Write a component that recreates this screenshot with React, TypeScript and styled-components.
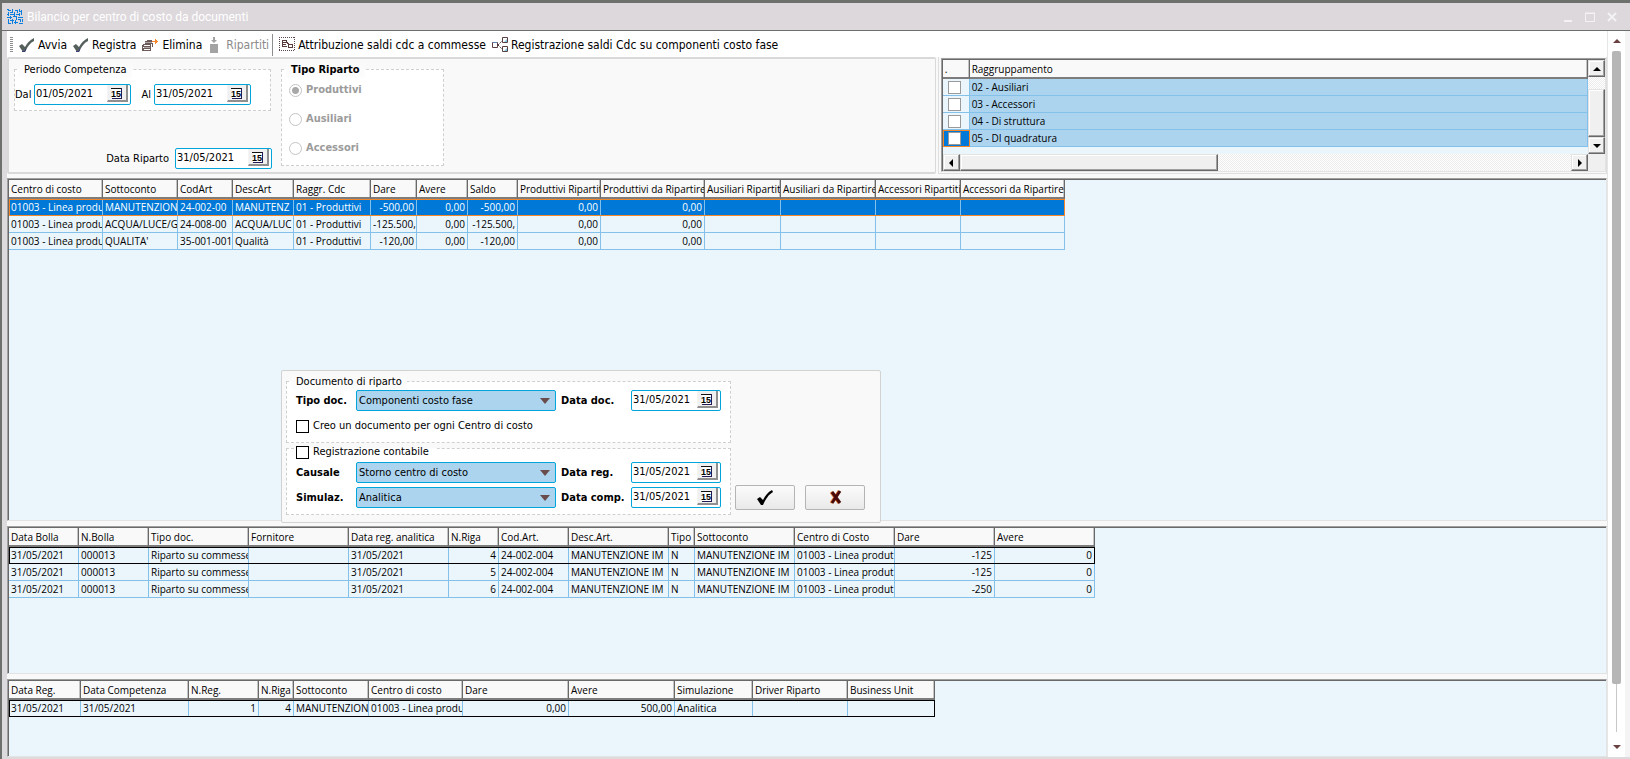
import React from "react";
import styled, { createGlobalStyle, css } from "styled-components";

const UI = '"DejaVu Sans Condensed", "DejaVu Sans", Tahoma, sans-serif';
const GRID = '"Open Sans", "Noto Sans", sans-serif';

const GlobalStyle = createGlobalStyle`
  *, *::before, *::after { box-sizing: border-box; }
  body { margin: 0; background: #dcdadc; font: 11px/16px ${UI}; color: #000; }
  button, input, select { font: inherit; color: inherit; margin: 0; }
`;

/* Window frame */
const Window = styled.div`
  min-height: 100vh;
  display: flex;
  flex-direction: column;
  border-top: 3px solid #6e706e;
  border-left: 2px solid #6e706e;
  background: #dcdadc;
`;
const TitleBar = styled.header`
  height: 28px;
  display: flex;
  align-items: center;
  gap: 4px;
  padding: 0 9px 0 5px;
  background: #ddd8dc;
  border-bottom: 1px solid #6e706e;
  color: #fff;
`;
const Title = styled.h1`
  flex: 1;
  margin: 0;
  font: 12px/16px Roboto, sans-serif;
`;
const WindowButton = styled.button`
  width: 18px;
  height: 18px;
  padding: 0;
  border: 0;
  background: none;
  display: grid;
  place-items: center;
`;
const Client = styled.div`
  flex: 1;
  display: flex;
  padding: 0 0 2px 5px;
`;
const Main = styled.main`
  flex: 1;
  min-width: 0;
  display: flex;
  flex-direction: column;
  background: #f9f9f9;
`;
const RightEdge = styled.div`
  width: 5px;
  background: #f4f4f4;
`;

/* Page scroll bar */
const PageScroll = styled.div`
  width: 18px;
  display: flex;
  flex-direction: column;
  align-items: center;
  background: #fff;
  border-left: 1px solid #e6e6e6;
`;
const PageArrow = styled.button`
  width: 16px;
  height: 20px;
  padding: 0;
  border: 0;
  background: none;
  display: grid;
  place-items: center;
`;
const PageTrack = styled.div`
  flex: 1;
  width: 9px;
  display: flex;
  flex-direction: column;
  margin-bottom: 5px;
  background: linear-gradient(#c8c8c8, #c8c8c8) center / 1px 100% no-repeat;
`;
const PageThumb = styled.div`
  height: 93%;
  flex: 0 0 93%;
  border-radius: 2px;
  background: #b6b6b6;
`;

/* Toolbar */
const Toolbar = styled.div`
  height: 26px;
  display: flex;
  align-items: center;
  padding: 1px 3px 0;
  background: #fff;
`;
const Grip = styled.span`
  width: 3px;
  height: 15px;
  margin-right: 3px;
  background: repeating-linear-gradient(#8e8e8e 0 1px, #fff 1px 2px);
`;
const ToolButton = styled.button`
  display: flex;
  align-items: center;
  gap: 3px;
  padding: 0 3px;
  border: 0;
  background: none;
  font-size: 12px;
  line-height: 18px;
  white-space: nowrap;
  &:disabled { color: #8a8a8a; gap: 8px; padding: 0 3px 0 5px; }
`;
const Divider = styled.span`
  width: 1px;
  height: 22px;
  margin-right: 3px;
  background: #8e8e8e;
`;

/* Filters */
const Filters = styled.section`
  display: flex;
  gap: 2px;
  height: 117px;
  margin-bottom: 4px;
`;
const FilterPanel = styled.form`
  flex: 922 1 0;
  display: flex;
  gap: 9px;
  padding: 2px 5px;
  border: 2px solid #d9d9d9;
  border-right-width: 1px;
  border-radius: 2px;
`;
const FilterColumn = styled.div`
  width: 258px;
  display: flex;
  flex-direction: column;
  justify-content: space-between;
`;
const Group = styled.fieldset<{ $w?: number; $h?: number }>`
  width: ${(p) => (p.$w ? p.$w + "px" : "auto")};
  height: ${(p) => (p.$h ? p.$h + "px" : "auto")};
  min-width: 0;
  margin: 0;
  padding: 0;
  border: 1px dashed #cfcfcf;
  background: #fff;
`;
const Legend = styled.legend<{ $bold?: boolean }>`
  margin-left: 4px;
  padding: 1px 5px 0;
  font-weight: ${(p) => (p.$bold ? "bold" : "normal")};
  background: linear-gradient(#f9f9f9, #fdfdfd);
`;
const DateLine = styled.div`
  display: flex;
  align-items: center;
  padding-top: 6px;
`;
const DateLineEnd = styled.div`
  display: flex;
  align-items: center;
  justify-content: flex-end;
  gap: 6px;
  padding-bottom: 1px;
`;
const DateLabel = styled.label<{ $w: number }>`
  width: ${(p) => p.$w}px;
  padding: 1px 3px 0 0;
  text-align: right;
`;
const DateBox = styled.span<{ $w: number }>`
  display: flex;
  width: ${(p) => p.$w}px;
  height: 21px;
  padding-right: 2px;
  border: 1px solid #00a5dc;
  border-radius: 2px;
  background: #fff;
`;
const DateInput = styled.input`
  flex: 1;
  min-width: 0;
  height: 17px;
  padding: 0 0 0 1px;
  border: 0;
  background: none;
`;
const CalendarButton = styled.button`
  width: 21px;
  height: 17px;
  padding: 0;
  border: solid;
  border-width: 0 2px 2px 1px;
  border-color: #f0f0f0 #8f8f8f #8f8f8f #f4f4f4;
  background: #f0f0f0;
  display: grid;
  place-items: center;
`;
const Radios = styled.div`
  display: flex;
  flex-direction: column;
  gap: 13px;
  padding: 4px 0 0 7px;
`;
const RadioLabel = styled.label`
  display: flex;
  align-items: center;
  gap: 4px;
  color: #9b9b9b;
  font-weight: bold;
`;
const Radio = styled.input`
  appearance: none;
  width: 13px;
  height: 13px;
  border: 1px solid #c4c4c4;
  border-radius: 50%;
  background: #fff;
  &:checked { background: radial-gradient(#a8a8a8 0 3px, #fff 4px); }
`;
const Check = styled.input<{ $dark?: boolean }>`
  appearance: none;
  display: block;
  width: 13px;
  height: 13px;
  border: 1px solid ${(p) => (p.$dark ? "#000" : "#9a9a9a")};
  background: #fff;
`;

/* Grids */
const Frame = styled.div`
  min-width: 0;
  padding: 1px 0 0 1px;
  border: 1px solid #a0a0a0;
  border-right-color: #e3e3e3;
  border-bottom-color: #e3e3e3;
  background: #eaf5fc;
  box-shadow: inset 1px 1px 0 #696969;
`;
const Pane = styled.section<{ $grow: number }>`
  position: relative;
  flex: ${(p) => p.$grow} 1 0;
  display: flex;
  flex-direction: column;
  margin-bottom: ${(p) => (p.$grow > 100 ? 5 : 0)}px;
  & > ${Frame} { flex: 1; }
`;
const Table = styled.table<{ $w?: number }>`
  width: ${(p) => (p.$w ? p.$w + "px" : "100%")};
  table-layout: fixed;
  border-collapse: separate;
  border-spacing: 0;
  font: 10px/16px ${GRID};
`;
const Th = styled.th`
  height: 19px;
  padding: 1px 0 0 2px;
  overflow: hidden;
  white-space: nowrap;
  text-align: left;
  font-weight: normal;
  background: #f9f9f9;
  border-right: 1px solid #696969;
  border-bottom: 2px solid #7d7d7d;
  box-shadow: inset -1px 0 0 #c4c4c4;
`;
const Td = styled.td<{ $right?: boolean; $fill?: string }>`
  height: 17px;
  padding: 0 ${(p) => (p.$right ? 2 : 0)}px 0 2px;
  overflow: hidden;
  white-space: nowrap;
  text-align: ${(p) => (p.$right ? "right" : "left")};
  border-right: 1px solid #83c0ea;
  border-bottom: 1px solid #83c0ea;
  ${(p) => p.$fill && css`background: ${p.$fill};`}
`;
const Tr = styled.tr<{ $mark?: "active" | "current" }>`
  ${(p) =>
    p.$mark === "active" &&
    css`
      background: #0078d7;
      color: #fff;
      outline: 1px solid #f5872b;
      outline-offset: -1px;
    `}
  ${(p) =>
    p.$mark === "current" &&
    css`
      outline: 1px solid #000;
      outline-offset: -1px;
    `}
`;

/* Grouping list with classic scroll bars */
const GroupPanel = styled.div`
  flex: 670 1 0;
  min-width: 0;
  display: flex;
  padding: 1px 0 1px 2px;
  border: solid #dedede;
  border-width: 0 1px 1px 1px;
  & > ${Frame} { flex: 1; display: flex; flex-direction: column; }
`;
const ListRow = styled.div`
  display: flex;
  flex: 1;
  min-height: 0;
`;
const ListBody = styled.div`
  flex: 1;
  min-width: 0;
`;
const CheckCell = styled(Td)<{ $active?: boolean }>`
  padding: 0 5px;
  ${(p) =>
    p.$active &&
    css`
      background: #0078d7;
      outline: 1px solid #f5872b;
      outline-offset: -1px;
    `}
`;
const track = css`
  display: flex;
  background: repeating-conic-gradient(#ececec 0 25%, #fff 0 50%) 0 0 / 2px 2px;
`;
const VScroll = styled.div`
  ${track}
  flex-direction: column;
  width: 17px;
`;
const HRow = styled.div`
  display: flex;
  height: 17px;
  background: #f0f0f0;
  padding-right: 17px;
`;
const HScroll = styled.div`
  ${track}
  flex: 1;
`;
const raised = css`
  border: 1px solid;
  border-color: #e3e3e3 #696969 #696969 #e3e3e3;
  background: #f0f0f0;
  box-shadow: inset -1px -1px 0 #a0a0a0, inset 1px 1px 0 #fff;
`;
const ScrollButton = styled.button`
  ${raised}
  width: 17px;
  height: 17px;
  flex: none;
  padding: 0;
  display: grid;
  place-items: center;
`;
const VThumb = styled.div`
  ${raised}
  flex: 1;
  margin-top: 12px;
`;
const HSpace = styled.div`
  flex: 1;
`;
const HThumb = styled.div`
  ${raised}
  width: 40%;
`;

/* Floating document panel */
const Dialog = styled.form`
  position: absolute;
  left: 274px;
  bottom: -2px;
  width: 600px;
  height: 153px;
  display: flex;
  align-items: flex-start;
  gap: 4px;
  padding: 2px 4px;
  border: 1px solid #d2d2d2;
  border-radius: 2px;
  background: #f9f9f9;
`;
const Groups = styled.div`
  width: 445px;
  display: flex;
  flex-direction: column;
  gap: 1px;
`;
const FieldRows = styled.div<{ $top?: number }>`
  display: grid;
  grid-template-columns: 60px 200px 75px 90px;
  row-gap: 4px;
  align-items: center;
  padding: ${(p) => p.$top || 0}px 0 0 9px;
`;
const FieldLabel = styled.label<{ $gap?: boolean }>`
  padding-left: ${(p) => (p.$gap ? 5 : 0)}px;
  font-weight: bold;
  white-space: nowrap;
`;
const SelectBox = styled.span`
  position: relative;
  display: block;
  height: 21px;
  & > svg { position: absolute; right: 6px; top: 8px; pointer-events: none; }
`;
const Select = styled.select`
  appearance: none;
  width: 100%;
  height: 21px;
  padding: 0 20px 0 2px;
  border: 1px solid #00a5dc;
  border-radius: 2px;
  background: #acd4ef;
`;
const CheckLabel = styled.label`
  display: flex;
  align-items: center;
  gap: 4px;
  padding: 7px 0 0 9px;
`;
const CheckLegend = styled.legend`
  height: 8px;
  margin-left: 7px;
  padding: 0 8px 0 2px;
`;
const LegendLabel = styled.label`
  display: flex;
  align-items: center;
  gap: 4px;
  height: 16px;
`;
const Actions = styled.div`
  align-self: flex-end;
  display: flex;
  gap: 10px;
  padding-bottom: 10px;
`;
const ActionButton = styled.button`
  width: 60px;
  height: 25px;
  padding: 0;
  border: 1px solid #b4b4b4;
  border-radius: 2px;
  background: linear-gradient(#fbfbfb, #e9e9e9);
  display: grid;
  place-items: center;
`;

/* Icons */
const AppIcon = () => (
  <svg width="16" height="16" viewBox="0 0 16 16" fill="none" stroke="#0a7fe0" strokeWidth="1" shapeRendering="crispEdges">
    <path d="M1 1.5h3M5.5 0v4M3 3.5h3M8 1.5h3M10.5 1v3M12 2.5h3M14.5 1v5M1.5 3v4M3 5.5h5M7.5 3v4M9 5.5h3M12.5 4v3M0 8.5h5M3.5 7v3M6 7.5h4M9.5 7v4M11 8.5h5M1.5 10v5M3 11.5h4M5.5 10v5M7 13.5h4M8.5 11v4M11 10.5h3M13.5 10v3M12 14.5h4M2 14.5h2M15.5 10v3M0 .5h2M12.5 0v2M0 5.5h1" />
  </svg>
);
const CheckIcon = () => (
  <svg width="16" height="16" viewBox="0 0 16 16">
    <path d="M0 9 3 7l3 3C8 6 11 3 15 1v3C11 6 8 10 6 15H4Z" fill="#55605c" />
    <path d="M3 14.500h3l1-3" fill="none" stroke="#3a3f7a" />
  </svg>
);
const DeleteIcon = () => (
  <svg width="17" height="16" viewBox="0 0 17 16" fill="none" shapeRendering="crispEdges">
    <path d="M1.500 7.500h7v2h-7zM1.500 11.500h7v2h-7zM.5 8v6M8.500 8v5" stroke="#6b5a58" />
    <path d="M2.500 6.500h8M4 4.500h6M5 3.500h5M10.500 6v4M3.500 4v2" stroke="#6b5a58" />
    <path d="M3 5h7v1H3zM2 10h6v1H2z" fill="#b0a6a4" />
    <path d="M10 4.500h6M13.500 2v5M14.500 3v3" stroke="#f5872b" />
  </svg>
);
const DistributeIcon = () => (
  <svg width="8" height="16" viewBox="0 0 8 16" fill="#a3a3a3">
    <path d="M0 7h8v9H0zM3 0h2v3h2L4 6 1 3h2z" />
  </svg>
);
const AssignIcon = () => (
  <svg width="16" height="15" viewBox="0 0 16 15" fill="none" shapeRendering="crispEdges">
    <path d="M0 .5h16M0 13.500h16M.5 0v14M15.500 0v14" stroke="#5a4646" strokeDasharray="1 1" />
    <path d="M3.500 3.500h4v2h-4zM9.500 7.500h4v3h-4zM3.500 6v4M3 9.500h5M8 5.500l2 2M2.500 7.500h4" stroke="#5a3c3c" />
  </svg>
);
const RegisterIcon = () => (
  <svg width="16" height="16" viewBox="0 0 16 16" fill="none">
    <path d="M.5 5.500h5v5h-5zM10.500.5h5v5h-5zM10.500 9.500h5v5h-5z" stroke="#5a4040" />
    <path d="M1 5.500h4" stroke="#5b7fb0" />
    <path d="m6 8 4-4M6 8l4 4" stroke="#5a4040" strokeDasharray="2 1" />
    <path d="M12 5h3V2zM12 14h3v-3z" fill="#7fc4e0" />
  </svg>
);
const CalendarIcon = () => (
  <svg width="14" height="14" viewBox="0 0 14 14" aria-hidden="true">
    <path d="M2 2h9v10H2z" fill="#fff" />
    <path d="M1 2.500h10" fill="none" stroke="#111" />
    <path d="M11.500 2v11M2 12.500h10" fill="none" stroke="#241a52" strokeWidth="1" />
    <text x="6" y="11" textAnchor="middle" fontSize="9" fontWeight="bold" fontFamily="Liberation Sans">15</text>
  </svg>
);
type Dir = "up" | "down" | "left" | "right";
const shapes: Record<Dir, string> = {
  up: "M4 0 8 4H0Z",
  down: "M0 0h8L4 4Z",
  left: "M4 0v8L0 4Z",
  right: "M0 0v8l4-4Z",
};
const Arrow = ({ dir, fill = "#000" }: { dir: Dir; fill?: string }) => {
  const wide = dir === "up" || dir === "down";
  return (
    <svg width={wide ? 8 : 4} height={wide ? 4 : 8}>
      <path d={shapes[dir]} fill={fill} />
    </svg>
  );
};

const DateField = ({ id, value, width }: { id: string; value: string; width: number }) => (
  <DateBox $w={width}>
    <DateInput id={id} type="text" defaultValue={value} />
    <CalendarButton type="button" aria-label="Calendario">
      <CalendarIcon />
    </CalendarButton>
  </DateBox>
);
const SelectField = ({ id, value }: { id: string; value: string }) => (
  <SelectBox>
    <Select id={id} defaultValue={value}>
      <option>{value}</option>
    </Select>
    <svg width="10" height="6">
      <path d="M0 0h10L5 6Z" fill="#6b4c4c" />
    </svg>
  </SelectBox>
);

type Column = [label: string, width: number, right?: boolean];
interface GridProps {
  columns: Column[];
  rows: string[][];
  mark: "active" | "current";
}
const DataGrid = ({ columns, rows, mark }: GridProps) => (
  <Frame>
    <Table $w={columns.reduce((sum, c) => sum + c[1], 0)}>
      <colgroup>
        {columns.map((c, i) => (
          <col key={i} width={c[1]} />
        ))}
      </colgroup>
      <thead>
        <tr>
          {columns.map((c, i) => (
            <Th key={i}>{c[0]}</Th>
          ))}
        </tr>
      </thead>
      <tbody>
        {rows.map((row, r) => (
          <Tr key={r} $mark={r === 0 ? mark : undefined}>
            {columns.map((c, i) => (
              <Td key={i} $right={c[2]}>
                {row[i]}
              </Td>
            ))}
          </Tr>
        ))}
      </tbody>
    </Table>
  </Frame>
);

const costColumns: Column[] = [
  ["Centro di costo", 94], ["Sottoconto", 75], ["CodArt", 55], ["DescArt", 61], ["Raggr. Cdc", 77],
  ["Dare", 46, true], ["Avere", 51, true], ["Saldo", 50, true], ["Produttivi Ripartit", 83, true],
  ["Produttivi da Ripartire", 104, true], ["Ausiliari Ripartiti", 76], ["Ausiliari da Ripartire", 95],
  ["Accessori Ripartiti", 85], ["Accessori da Ripartire", 104],
];
const costRows = [
  ["01003 - Linea produ", "MANUTENZION", "24-002-00", "MANUTENZ", "01 - Produttivi", "-500,00", "0,00", "-500,00", "0,00", "0,00"],
  ["01003 - Linea produ", "ACQUA/LUCE/G", "24-008-00", "ACQUA/LUC", "01 - Produttivi", "-125.500,", "0,00", "-125.500,", "0,00", "0,00"],
  ["01003 - Linea produ", "QUALITA'", "35-001-001", "Qualità", "01 - Produttivi", "-120,00", "0,00", "-120,00", "0,00", "0,00"],
];
const docColumns: Column[] = [
  ["Data Bolla", 70], ["N.Bolla", 70], ["Tipo doc.", 100], ["Fornitore", 100], ["Data reg. analitica", 100],
  ["N.Riga", 50, true], ["Cod.Art.", 70], ["Desc.Art.", 100], ["Tipo", 26], ["Sottoconto", 100],
  ["Centro di Costo", 100], ["Dare", 100, true], ["Avere", 100, true],
];
const docRows = [["4", "-125"], ["5", "-125"], ["6", "-250"]].map(([n, dare]) => [
  "31/05/2021", "000013", "Riparto su commesse", "", "31/05/2021", n, "24-002-004",
  "MANUTENZIONE IM", "N", "MANUTENZIONE IM", "01003 - Linea produt", dare, "0",
]);
const regColumns: Column[] = [
  ["Data Reg.", 72], ["Data Competenza", 108], ["N.Reg.", 70, true], ["N.Riga", 35, true], ["Sottoconto", 75],
  ["Centro di costo", 94], ["Dare", 106, true], ["Avere", 106, true], ["Simulazione", 78],
  ["Driver Riparto", 95], ["Business Unit", 87],
];
const regRows = [["31/05/2021", "31/05/2021", "1", "4", "MANUTENZION", "01003 - Linea produ", "0,00", "500,00", "Analitica"]];
const groups = ["02 - Ausiliari", "03 - Accessori", "04 - Di struttura", "05 - DI quadratura"];

export default function App() {
  return (
    <>
      <GlobalStyle />
      <Window>
        <TitleBar>
          <AppIcon />
          <Title>Bilancio per centro di costo da documenti</Title>
          <WindowButton aria-label="Riduci">
            <svg width="10" height="10"><path d="M1 8h8v2H1z" fill="#f4f2f4" /></svg>
          </WindowButton>
          <WindowButton aria-label="Ingrandisci">
            <svg width="10" height="10"><path d="M.5 1.500h9v8h-9zM0 1h10" fill="none" stroke="#f4f2f4" /></svg>
          </WindowButton>
          <WindowButton aria-label="Chiudi">
            <svg width="10" height="10"><path d="m1 1 8 8M9 1 1 9" stroke="#f4f2f4" strokeWidth="2" /></svg>
          </WindowButton>
        </TitleBar>
        <Client>
          <Main>
            <Toolbar role="toolbar">
              <Grip />
              <ToolButton><CheckIcon />Avvia</ToolButton>
              <ToolButton><CheckIcon />Registra</ToolButton>
              <ToolButton><DeleteIcon />Elimina</ToolButton>
              <ToolButton disabled><DistributeIcon />Ripartiti</ToolButton>
              <Divider />
              <ToolButton><AssignIcon />Attribuzione saldi cdc a commesse</ToolButton>
              <ToolButton><RegisterIcon />Registrazione saldi Cdc su componenti costo fase</ToolButton>
            </Toolbar>

            <Filters>
              <FilterPanel>
                <FilterColumn>
                  <Group $w={257} $h={50}>
                    <Legend>Periodo Competenza</Legend>
                    <DateLine>
                      <DateLabel $w={19} htmlFor="dal">Dal</DateLabel>
                      <DateField id="dal" value="01/05/2021" width={97} />
                      <DateLabel $w={23} htmlFor="al">Al</DateLabel>
                      <DateField id="al" value="31/05/2021" width={97} />
                    </DateLine>
                  </Group>
                  <DateLineEnd>
                    <label htmlFor="riparto">Data Riparto</label>
                    <DateField id="riparto" value="31/05/2021" width={97} />
                  </DateLineEnd>
                </FilterColumn>
                <Group $w={163} $h={105}>
                  <Legend $bold>Tipo Riparto</Legend>
                  <Radios>
                    {["Produttivi", "Ausiliari", "Accessori"].map((name, i) => (
                      <RadioLabel key={name}>
                        <Radio type="radio" name="tipo" disabled defaultChecked={i === 0} />
                        {name}
                      </RadioLabel>
                    ))}
                  </Radios>
                </Group>
              </FilterPanel>
              <GroupPanel>
                <Frame>
                  <ListRow>
                    <ListBody>
                      <Table>
                        <colgroup>
                          <col width="27" />
                          <col />
                        </colgroup>
                        <thead>
                          <tr>
                            <Th>.</Th>
                            <Th>Raggruppamento</Th>
                          </tr>
                        </thead>
                        <tbody>
                          {groups.map((name, i) => (
                            <tr key={name}>
                              <CheckCell $active={i === 3}>
                                <Check type="checkbox" aria-label={name} />
                              </CheckCell>
                              <Td $fill="#acd4ef">{name}</Td>
                            </tr>
                          ))}
                        </tbody>
                      </Table>
                    </ListBody>
                    <VScroll>
                      <ScrollButton aria-label="Su"><Arrow dir="up" /></ScrollButton>
                      <VThumb />
                      <ScrollButton aria-label="Giù"><Arrow dir="down" /></ScrollButton>
                    </VScroll>
                  </ListRow>
                  <HRow>
                    <HScroll>
                      <ScrollButton aria-label="Sinistra"><Arrow dir="left" /></ScrollButton>
                      <HThumb />
                      <HSpace />
                      <ScrollButton aria-label="Destra"><Arrow dir="right" /></ScrollButton>
                    </HScroll>
                  </HRow>
                </Frame>
              </GroupPanel>
            </Filters>

            <Pane $grow={343}>
              <DataGrid columns={costColumns} rows={costRows} mark="active" />
              <Dialog>
                <Groups>
                  <Group $h={70}>
                    <Legend>Documento di riparto</Legend>
                    <FieldRows>
                      <FieldLabel htmlFor="tipodoc">Tipo doc.</FieldLabel>
                      <SelectField id="tipodoc" value="Componenti costo fase" />
                      <FieldLabel $gap htmlFor="datadoc">Data doc.</FieldLabel>
                      <DateField id="datadoc" value="31/05/2021" width={90} />
                    </FieldRows>
                    <CheckLabel>
                      <Check $dark type="checkbox" />
                      Creo un documento per ogni Centro di costo
                    </CheckLabel>
                  </Group>
                  <Group $h={71}>
                    <CheckLegend>
                      <LegendLabel>
                        <Check $dark type="checkbox" />
                        Registrazione contabile
                      </LegendLabel>
                    </CheckLegend>
                    <FieldRows $top={10}>
                      <FieldLabel htmlFor="causale">Causale</FieldLabel>
                      <SelectField id="causale" value="Storno centro di costo" />
                      <FieldLabel $gap htmlFor="datareg">Data reg.</FieldLabel>
                      <DateField id="datareg" value="31/05/2021" width={90} />
                      <FieldLabel htmlFor="simulaz">Simulaz.</FieldLabel>
                      <SelectField id="simulaz" value="Analitica" />
                      <FieldLabel $gap htmlFor="datacomp">Data comp.</FieldLabel>
                      <DateField id="datacomp" value="31/05/2021" width={90} />
                    </FieldRows>
                  </Group>
                </Groups>
                <Actions>
                  <ActionButton type="button" aria-label="Conferma">
                    <svg width="16" height="15"><path d="m0 9 3-2 3 3C8 6 11 2 15 0l1 2C11 5 9 9 6 15H4Z" fill="#000" /></svg>
                  </ActionButton>
                  <ActionButton type="button" aria-label="Annulla">
                    <svg width="13" height="15" fill="none">
                      <path d="m2 2 8 11M10 1 2 13" stroke="#e8803c" strokeWidth="3" />
                      <path d="m3 2 8 11M11 1 3 13" stroke="#4a0a0a" strokeWidth="3" />
                    </svg>
                  </ActionButton>
                </Actions>
              </Dialog>
            </Pane>
            <Pane $grow={148}>
              <DataGrid columns={docColumns} rows={docRows} mark="current" />
            </Pane>
            <Pane $grow={78}>
              <DataGrid columns={regColumns} rows={regRows} mark="current" />
            </Pane>
          </Main>
          <PageScroll>
            <PageArrow aria-label="Scorri su"><Arrow dir="up" fill="#6b4040" /></PageArrow>
            <PageTrack>
              <PageThumb />
            </PageTrack>
            <PageArrow aria-label="Scorri giù"><Arrow dir="down" fill="#6b4040" /></PageArrow>
          </PageScroll>
          <RightEdge />
        </Client>
      </Window>
    </>
  );
}
